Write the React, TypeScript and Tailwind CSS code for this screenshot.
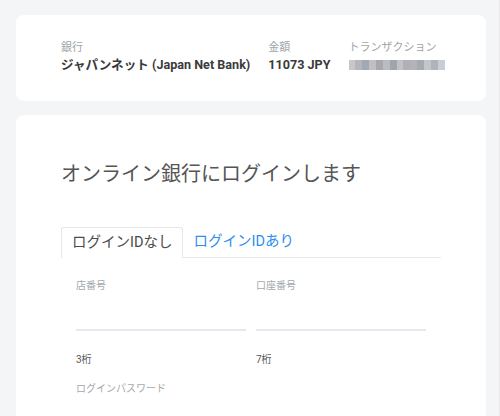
import React from "react";

const font = { fontFamily: "Roboto, 'Noto Sans CJK JP', sans-serif" };

export default function App() {
  return (
    <div className="w-[500px] h-[416px] overflow-hidden bg-[#f4f5f6] pt-[15px] pl-[16px] pr-[13px] flex flex-col gap-[14px] border-r border-[#e8e8e8]" style={font}>
      <div className="bg-white rounded-[8px] h-[86px] pl-[45px] pt-[25px] flex gap-[18px] shrink-0">
        <div className="flex flex-col">
          <span className="text-[11px] leading-[16px] text-[#a0a4a8]">銀行</span>
          <span className="text-[12.6px] leading-[18px] font-bold text-[#3a3a3a]">ジャパンネット (Japan Net Bank)</span>
        </div>
        <div className="flex flex-col">
          <span className="text-[11px] leading-[16px] text-[#a0a4a8]">金額</span>
          <span className="text-[12.6px] leading-[18px] font-bold text-[#3a3a3a]">11073 JPY</span>
        </div>
        <div className="flex flex-col">
          <span className="text-[11px] leading-[16px] text-[#a0a4a8]">トランザクション</span>
          <div className="mt-[4px] flex h-[10px] w-[96px]">
            {["#c8c8cc","#b4b6bb","#a3a9b2","#c0bfc4","#a9a7ab","#b9bcc1","#9fa5ad","#c3c1c4","#aeb2b8","#b5b3b7","#a6abb2","#c4c6ca","#b0b4ba","#c9ced6"].map((c, i) => (
              <div key={i} className="flex-1" style={{ background: c }} />
            ))}
          </div>
        </div>
      </div>
      <div className="bg-white rounded-t-[8px] flex-1 pl-[45px] pt-[45px] pr-[45px]">
        <h1 className="text-[20px] leading-[28px] text-[#555] font-normal">オンライン銀行にログインします</h1>
        <div className="mt-[39px] flex border-b border-[#e6e9ee] w-[380px] h-[31px]">
          <div className="border border-b-0 border-[#e3e6ea] rounded-t-[3px] px-[10px] bg-white -mb-px flex items-center text-[14.5px] text-[#4a4a4a]">ログインIDなし</div>
          <div className="px-[10px] flex items-center text-[14.5px] text-[#2b8ef0]">ログインIDあり</div>
        </div>
        <div className="pl-[15px] pt-[21px] flex gap-[10px]">
          <div className="w-[170px] flex flex-col">
            <span className="text-[10px] leading-[14px] text-[#a4a8ac]">店番号</span>
            <div className="h-[38px] border-b-2 border-[#e4e9f0]" />
            <span className="mt-[22px] text-[10px] leading-[14px] text-[#555]">3桁</span>
          </div>
          <div className="w-[170px] flex flex-col">
            <span className="text-[10px] leading-[14px] text-[#a4a8ac]">口座番号</span>
            <div className="h-[38px] border-b-2 border-[#e4e9f0]" />
            <span className="mt-[22px] text-[10px] leading-[14px] text-[#555]">7桁</span>
          </div>
        </div>
        <div className="pl-[15px] mt-[15px] text-[10px] leading-[14px] text-[#a4a8ac]">ログインパスワード</div>
      </div>
    </div>
  );
}
